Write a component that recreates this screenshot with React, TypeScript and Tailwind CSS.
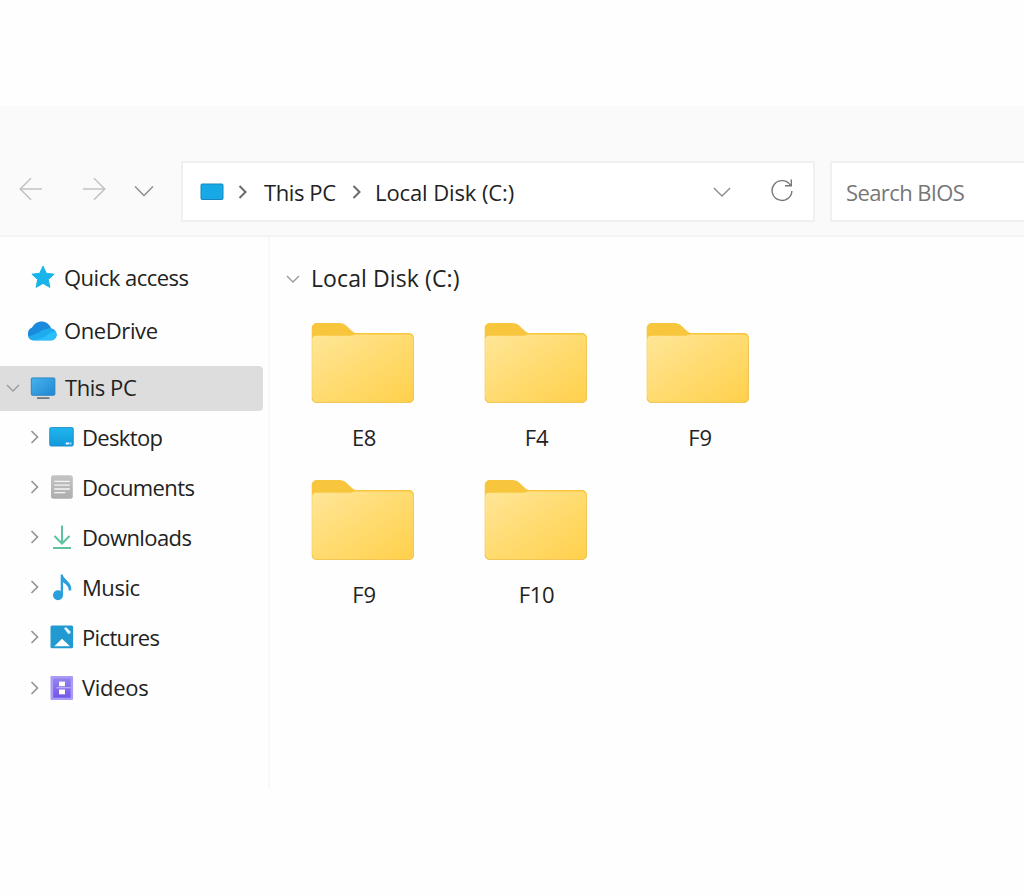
import type { ReactNode } from 'react';

type SidebarItem = {
  label: string;
  icon: ReactNode;
  tracking: string;
};

type Folder = {
  id: number;
  name: string;
};

const folders: Folder[] = [
  { id: 1, name: 'E8' },
  { id: 2, name: 'F4' },
  { id: 3, name: 'F9' },
  { id: 4, name: 'F9' },
  { id: 5, name: 'F10' },
];

function ChevronRight({ className }: { className: string }) {
  return (
    <svg viewBox="0 0 8 14" fill="none" stroke="currentColor" className={className}>
      <path d="M1 1l6 6-6 6" />
    </svg>
  );
}

function ChevronDown({ className }: { className: string }) {
  return (
    <svg viewBox="0 0 20 12" fill="none" stroke="currentColor" className={className}>
      <path d="M1 1.5l9 9 9-9" />
    </svg>
  );
}

function Arrow({ className }: { className: string }) {
  return (
    <svg viewBox="0 0 24 24" fill="none" stroke="currentColor" strokeWidth="1.5" className={className}>
      <path d="M23 12H1.2M12 1.3L1.2 12 12 22.7" />
    </svg>
  );
}

function RefreshIcon() {
  return (
    <svg viewBox="0 0 22 24" fill="none" stroke="#777" strokeWidth="1.4" className="h-6 w-[22px]">
      <path d="M20.9 13A9.9 9.9 0 1 1 19.600 7.600M20.300 1.500v6.300h-6.300" />
    </svg>
  );
}

function StarIcon() {
  return (
    <svg viewBox="0 0 24 24" className="h-6 w-6">
      <path
        d="M12 1.1l3.300 7.200 7.800.9-5.800 5.300 1.600 7.900-6.900-4-6.900 4 1.600-7.900L.9 9.200l7.800-.9z"
        fill="#18b4ea"
        stroke="#18b4ea"
        strokeLinejoin="round"
      />
    </svg>
  );
}

function CloudIcon() {
  return (
    <svg viewBox="0 0 30 20" className="h-5 w-[30px]">
      <defs>
        <clipPath id="cloud">
          <path d="M7 19.300C3 19.300.9 16.500.9 13c0-3.300 1.500-5.500 4.200-6.400C7 2.800 10.500.6 14.500.6c4.300 0 7.800 2.500 9.700 6.800 3.400.7 5.300 3 5.300 6.100 0 3.500-2.400 5.800-6 5.800z" />
        </clipPath>
      </defs>
      <g clipPath="url(#cloud)">
        <path d="M0 0h30v20H0z" fill="#1a8add" />
        <path d="M0 16c5-1.500 9-3 13-5.500 4-2.300 8-3.700 17-3.500v13H0z" fill="#20abf0" />
        <path d="M3 20c8-1 14-3.500 18-6.500 3-2.200 5.500-3 9-3V20z" fill="#28bffa" />
      </g>
    </svg>
  );
}

function MonitorIcon() {
  return (
    <svg viewBox="0 0 26 24" className="h-6 w-[26px]">
      <defs>
        <linearGradient id="monitor" x1="0" y1="0" x2="1" y2="1">
          <stop offset="0" stopColor="#46b3ed" />
          <stop offset="1" stopColor="#2187d3" />
        </linearGradient>
      </defs>
      <rect x="1.300" y="1.900" width="23.600" height="17.400" rx="1.200" fill="url(#monitor)" stroke="#2480bd" strokeWidth=".9" />
      <rect x="7" y="21.300" width="12.500" height="1.600" rx=".5" fill="#6d7780" />
    </svg>
  );
}

function DesktopIcon() {
  return (
    <svg viewBox="0 0 26 22" className="h-[22px] w-[26px]">
      <defs>
        <linearGradient id="desktop" x1="0" y1="0" x2="0" y2="1">
          <stop offset="0" stopColor="#1fb6ec" />
          <stop offset="1" stopColor="#1299dc" />
        </linearGradient>
      </defs>
      <rect x=".7" y="1.500" width="23.600" height="18.600" rx="1.500" fill="url(#desktop)" stroke="#1788c2" strokeWidth=".8" />
      <path d="M16.700 17.500h3.700M21.300 17.500h1" stroke="#e7f8ff" strokeWidth="1.800" />
    </svg>
  );
}

function DocumentsIcon() {
  return (
    <svg viewBox="0 0 24 26" className="h-[26px] w-6">
      <defs>
        <linearGradient id="doc" x1="0" y1="0" x2="0" y2="1">
          <stop offset="0" stopColor="#c4c4c4" />
          <stop offset="1" stopColor="#adadad" />
        </linearGradient>
      </defs>
      <rect x="1" y="1.200" width="21.800" height="23.600" rx="2.500" fill="url(#doc)" />
      <path d="M4.300 7.300h15.500M4.300 11.200h15.500M4.300 15h15.500M4.300 18.600h11" stroke="#f5f5f5" strokeWidth="1.300" />
    </svg>
  );
}

function DownloadsIcon() {
  return (
    <svg viewBox="0 0 24 26" fill="none" stroke="#5dc2a0" strokeWidth="2" className="h-[26px] w-6">
      <path d="M12 1.500v17.500M4.500 12l7.500 7.500 7.500-7.500M3 24h18" />
    </svg>
  );
}

function MusicIcon() {
  return (
    <svg viewBox="0 0 24 28" className="h-7 w-6">
      <circle cx="8" cy="22.300" r="5" fill="#2a9fdc" />
      <path d="M10.700 1.500h1.900c.8 2.700 2.700 4.500 5 6.700 2.900 2.800 4 5.300 3.600 9.300h-2.500c.3-3.200-1.500-5.500-5.700-8.300v13.500h-2.300z" fill="#2a9fdc" />
    </svg>
  );
}

function PicturesIcon() {
  return (
    <svg viewBox="0 0 24 26" className="h-[26px] w-6">
      <rect x=".5" y="1.500" width="22.600" height="22.700" rx="1.500" fill="#2199d1" />
      <path d="M4.300 22.300l7.700-7.600 8 7.600z" fill="#fff" />
      <path d="M14 4.200c1.500-1.100 3-.5 3.800.7l2.500 2.400c.6 1.200.1 2.200-1.200 2.800-1.300-.4-1.800-1.200-2.300-2z" fill="#eefaff" />
    </svg>
  );
}

function VideosIcon() {
  return (
    <svg viewBox="0 0 24 26" className="h-[26px] w-6">
      <defs>
        <linearGradient id="video" x1="0" y1="0" x2="0" y2="1">
          <stop offset="0" stopColor="#9584ee" />
          <stop offset="1" stopColor="#7455ea" />
        </linearGradient>
      </defs>
      <rect x=".5" y="1" width="22.600" height="24" rx="1.200" fill="#a89cf5" />
      <rect x="3.200" y="3.300" width="17.400" height="19.400" fill="url(#video)" />
      <path d="M6.500 12.700h14" stroke="#b9abf7" strokeWidth="1.400" />
      <rect x="9" y="6.600" width="6" height="4.600" fill="#fff" />
      <rect x="9" y="14.500" width="6" height="4.800" fill="#fff" />
    </svg>
  );
}

function FolderIcon() {
  return (
    <svg viewBox="0 0 104 82" className="h-[82px] w-[104px]">
      <defs>
        <linearGradient id="folder" x1="0" y1="0" x2="1" y2="1">
          <stop offset="0" stopColor="#ffe698" />
          <stop offset=".5" stopColor="#ffdb70" />
          <stop offset="1" stopColor="#ffd04b" />
        </linearGradient>
      </defs>
      <path d="M.7 6a5 5 0 0 1 5-5h22.500c3 0 5.200.8 7.200 2.700l5.300 5c1.800 1.700 3.200 2.300 5.500 2.300h51.800a5 5 0 0 1 5 5V76a5 5 0 0 1-5 5H5.700a5 5 0 0 1-5-5z" fill="#f7c63d" />
      <path d="M1.200 17.800a4 4 0 0 1 4-4h33c2.500 0 4-.7 6-1.300h52.800a5.300 5.300 0 0 1 5.500 5.300V76a4.500 4.500 0 0 1-4.500 4.500H5.700A4.500 4.500 0 0 1 1.200 76z" fill="url(#folder)" />
      <path d="M1.200 76A4.500 4.500 0 0 0 5.700 80.500h92.300A4.500 4.500 0 0 0 102.500 76V18" fill="none" stroke="#f1c556" strokeWidth="1" />
    </svg>
  );
}

const thisPcChildren: SidebarItem[] = [
  { label: 'Desktop', icon: <DesktopIcon />, tracking: 'tracking-[-0.65px]' },
  { label: 'Documents', icon: <DocumentsIcon />, tracking: 'tracking-[-0.6px]' },
  { label: 'Downloads', icon: <DownloadsIcon />, tracking: 'tracking-[-0.6px]' },
  { label: 'Music', icon: <MusicIcon />, tracking: 'tracking-[-0.45px]' },
  { label: 'Pictures', icon: <PicturesIcon />, tracking: 'tracking-[-0.65px]' },
  { label: 'Videos', icon: <VideosIcon />, tracking: 'tracking-[-0.3px]' },
];

function Toolbar() {
  return (
    <header className="flex h-[131px] items-start border-b-2 border-[#f4f4f4] bg-[#fafafa] pt-[55px]">
      <div className="flex h-[55px] w-[181px] shrink-0 items-center pl-[19px]">
        <Arrow className="h-6 w-6 text-[#c2c2c2]" />
        <Arrow className="ml-[39px] h-6 w-6 rotate-180 text-[#c2c2c2]" />
        <ChevronDown className="mt-1 ml-7 h-3 w-5 stroke-[1.4] text-[#8b8b8b]" />
      </div>

      <div className="flex h-[61px] w-[634px] shrink-0 items-center border-2 border-[#f0f0f0] bg-white pl-[17px] text-[22px] text-[#222]">
        <svg viewBox="0 0 24 18" className="h-[18px] w-6">
          <rect x="1" y="1" width="22" height="15.500" rx="1" fill="#16a9e6" stroke="#1586c0" />
        </svg>
        <ChevronRight className="ml-[14px] h-[14px] w-[9px] stroke-2 text-[#6a6a6a]" />
        <span className="mt-px ml-[17px] w-[73px] tracking-[-0.4px] whitespace-nowrap">This PC</span>
        <ChevronRight className="ml-[15px] h-[14px] w-[9px] stroke-2 text-[#6a6a6a]" />
        <span className="mt-px ml-[14px] tracking-[-0.1px] whitespace-nowrap">Local Disk (C:)</span>
        <ChevronDown className="mr-10 ml-auto h-3 w-[18px] stroke-[1.5] text-[#8b8b8b]" />
        <div className="mr-5 mb-[3px]">
          <RefreshIcon />
        </div>
      </div>

      <div className="ml-[15px] flex h-[61px] flex-1 items-center border-2 border-r-0 border-[#f0f0f0] bg-white pt-[2px] pl-[14px] text-[22px] tracking-[-0.6px] text-[#777]">
        Search BIOS
      </div>
    </header>
  );
}

function Sidebar() {
  return (
    <nav className="w-[270px] shrink-0 border-r-2 border-[#f8f8f8] pt-[13px] text-[22px] text-[#222]">
      <div className="flex h-[54px] items-center pl-[31px]">
        <StarIcon />
        <span className="ml-[9px] tracking-[-0.5px]">Quick access</span>
      </div>
      <div className="flex h-[53px] items-center pl-[27px]">
        <CloudIcon />
        <span className="ml-[7px] tracking-[-0.4px]">OneDrive</span>
      </div>
      <div className="mt-[9px] flex h-[45px] w-[263px] items-center rounded-r-[4px] bg-[#dddddd] pb-[2px] pl-[6px]">
        <ChevronDown className="h-2 w-[14px] stroke-2 text-[#999]" />
        <span className="ml-[10px]">
          <MonitorIcon />
        </span>
        <span className="ml-[9px] tracking-[-0.45px]">This PC</span>
      </div>
      <ul className="pt-px">
        {thisPcChildren.map((item) => (
          <li key={item.label} className="flex h-[50.1px] items-center pl-[30px]">
            <ChevronRight className="h-[14px] w-[9px] stroke-[1.6] text-[#929292]" />
            <span className="ml-[9px] flex w-[27px] justify-center">{item.icon}</span>
            <span className={`ml-[7px] ${item.tracking}`}>{item.label}</span>
          </li>
        ))}
      </ul>
    </nav>
  );
}

export default function App() {
  return (
    <div className="h-[896px] w-full overflow-hidden bg-[#fefefe] pt-[106px] font-['Open_Sans','Noto_Sans',sans-serif]">
      <Toolbar />

      <div className="flex h-[551px]">
        <Sidebar />

        <main className="flex-1 pt-[21px] pl-4">
          <div className="flex h-10 items-center text-[23px] text-[#222]">
            <ChevronDown className="mt-px h-2 w-[14px] stroke-2 text-[#999]" />
            <h1 className="ml-[11px] tracking-[0.1px]">Local Disk (C:)</h1>
          </div>

          <div className="grid grid-cols-[172.5px_162px_104px] gap-y-[22px] pt-6 pl-[25px]">
            {folders.map((folder) => (
              <div key={folder.id} className="flex h-[134.5px] w-[104px] flex-col items-center">
                <FolderIcon />
                <span
                  className={`mt-4 text-[22px] leading-[34px] tracking-[-0.3px] text-[#222] ${
                    folder.id === 3 ? 'pl-[5px]' : 'pl-[2px]'
                  }`}
                >
                  {folder.name}
                </span>
              </div>
            ))}
          </div>
        </main>
      </div>
    </div>
  );
}
